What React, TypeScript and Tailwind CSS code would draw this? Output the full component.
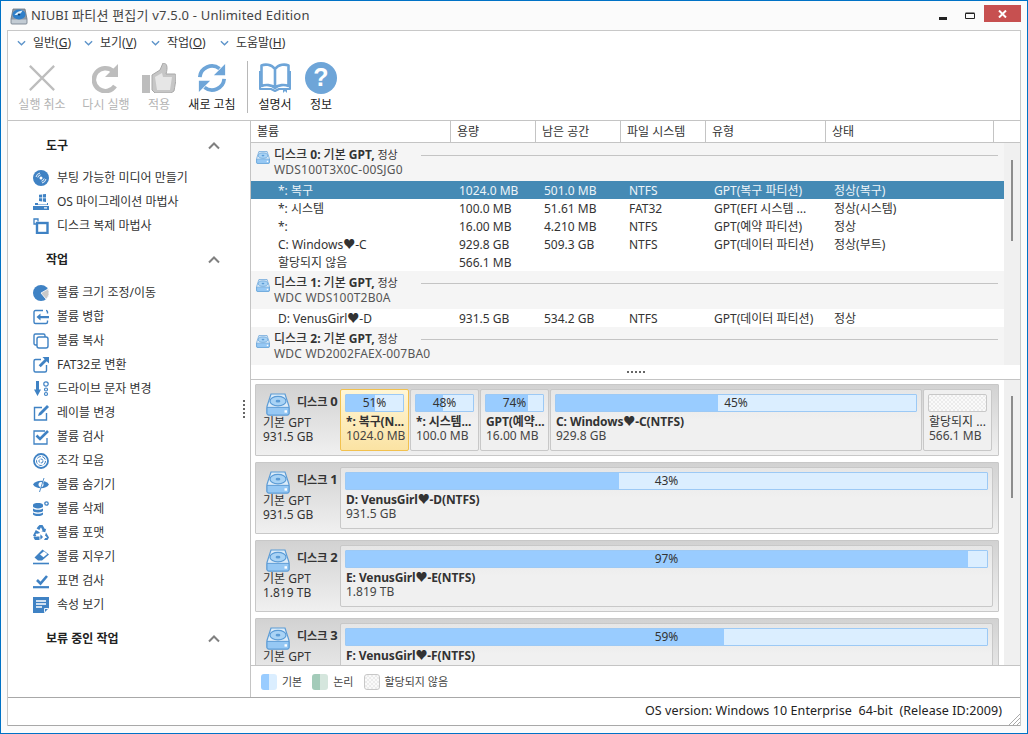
import type { ReactNode } from "react";

const BLUE = "#3f82c4";

function DiskIcon({ className }: { className: string }) {
  return (
    <svg viewBox="0 0 24 24" preserveAspectRatio="none" className={className}>
      <path d="M5 1h14l4 13v7a2 2 0 0 1-2 2H3a2 2 0 0 1-2-2v-7z" fill="#dcecf9" stroke="#5b9bd5" strokeWidth="1.200" />
      <path d="M1 15h22v6a2 2 0 0 1-2 2H3a2 2 0 0 1-2-2z" fill="#96c8f4" stroke="#5b9bd5" strokeWidth="1" />
      <ellipse cx="12" cy="8.500" rx="8" ry="5" fill="#a9d3f5" stroke="#5b9bd5" strokeWidth="1.200" />
      <ellipse cx="12" cy="8.500" rx="2.400" ry="1.500" fill="#5b9bd5" />
      <rect x="18.500" y="18" width="2.500" height="2.500" fill="#fff" />
    </svg>
  );
}

function AppIcon() {
  return (
    <svg viewBox="0 0 18 18" className="h-[18px] w-[18px] shrink-0">
      <path d="M3 2h12l2 10v4a1 1 0 0 1-1 1H2a1 1 0 0 1-1-1v-4z" fill="#8d99a6" stroke="#6a7683" strokeWidth="0.800" />
      <rect x="1.500" y="12.500" width="15" height="4" fill="#c3ccd4" />
      <ellipse cx="9" cy="7.500" rx="6.500" ry="5" fill="#2f7fc9" />
      <path d="M4.500 8c2-3 5-4 8-4.500-1 2.500-4 5-8 4.500z" fill="#dff0fb" />
      <ellipse cx="9" cy="7.500" rx="1.300" ry="1" fill="#123f6b" />
    </svg>
  );
}

function Ico({ children }: { children: ReactNode }) {
  return (
    <svg viewBox="0 0 16 16" className="h-4 w-4 shrink-0" fill="none" stroke={BLUE} strokeWidth="1.400">
      {children}
    </svg>
  );
}

const icons: Record<string, ReactNode> = {
  disc: (
    <>
      <circle cx="8" cy="8" r="8" fill={BLUE} stroke="none" />
      <path d="M3 7a5.200 5.200 0 0 1 4-4M4.800 7.500a3.400 3.400 0 0 1 2.700-2.700" stroke="#fff" strokeWidth="0.900" />
      <path d="M13 9a5.200 5.200 0 0 1-4 4M11.200 8.500a3.400 3.400 0 0 1-2.700 2.700" stroke="#fff" strokeWidth="0.900" />
      <circle cx="8" cy="8" r="1.500" fill="#fff" stroke="none" />
    </>
  ),
  os: (
    <g fill={BLUE} stroke="none">
      <path d="M6 0.800l3-.4v3.100H6zM9.800 0.300l3.200-.3v3.500H9.800zM6 4.300h3v3.100l-3-.4zM9.800 4.300H13V8l-3.200-.4z" />
      <path d="M2 9h3v1.500h9V9h1v2H2zM0 12h16v4H0z" />
      <rect x="11" y="13.300" width="3" height="1.200" fill="#fff" />
    </g>
  ),
  clone: (
    <>
      <path d="M5 3.500V1H1v5h2.500" strokeWidth="1.300" />
      <rect x="4" y="5" width="10.500" height="10" strokeWidth="2.400" />
    </>
  ),
  pie: (
    <>
      <circle cx="8" cy="8" r="8" fill={BLUE} stroke="none" />
      <path d="M8 8l7 -4a8 8 0 0 1-2 10.200z" fill="#c9c9c9" stroke="#fff" strokeWidth="0.800" />
    </>
  ),
  merge: (
    <>
      <path d="M10 1.500H2.500a1.500 1.500 0 0 0-1.500 1.500v10a1.500 1.500 0 0 0 1.500 1.500H13a1.500 1.500 0 0 0 1.500-1.500v-1.500M14.500 4.500V3A1.500 1.500 0 0 0 13 1.500" />
      <path d="M3.500 8l4-3.500V7h8.500v2.200H7.500v2.300z" fill={BLUE} stroke="none" />
    </>
  ),
  copy: (
    <>
      <path d="M4 12H2.500A1.500 1.500 0 0 1 1 10.500v-8A1.500 1.500 0 0 1 2.500 1h8A1.500 1.500 0 0 1 12 2.500V4" />
      <rect x="4" y="4" width="11" height="11" rx="2" />
    </>
  ),
  fat: (
    <>
      <path d="M8 2.500H2.500A1.500 1.500 0 0 0 1 4v9.500A1.500 1.500 0 0 0 2.500 15H12a1.500 1.500 0 0 0 1.500-1.500V8" />
      <path d="M9.500 0H16v6.500l-2.300-2.300-6 6-2-2 6-6z" fill={BLUE} stroke="none" />
    </>
  ),
  letter: (
    <>
      <path d="M1 8.500h2V0h3v8.500h2L4.500 15z" fill={BLUE} stroke="none" />
      <circle cx="13" cy="3" r="2.200" strokeWidth="1.200" />
      <circle cx="13" cy="8.500" r="1.500" strokeWidth="1.200" />
      <circle cx="13" cy="13" r="1.500" strokeWidth="1.200" />
    </>
  ),
  label: (
    <>
      <path d="M9 2.500H1.500v12.500h12V8" />
      <path d="M14 0l2 2-8 8-3 1 1-3z" fill={BLUE} stroke="none" />
    </>
  ),
  check: (
    <>
      <path d="M12 2H1v13h13V9" strokeWidth="1.300" />
      <path d="M3.500 6.500L7 10l8-8" strokeWidth="2.600" />
    </>
  ),
  defrag: (
    <>
      <circle cx="8" cy="8" r="7" strokeWidth="1.800" />
      <circle cx="8" cy="8" r="4.500" strokeWidth="1" strokeDasharray="4 1.500" />
      <circle cx="8" cy="8" r="2" strokeWidth="1" strokeDasharray="3 1" />
    </>
  ),
  hide: (
    <>
      <path d="M0 7.500C3 2.500 13 2.500 16 7.500 13 12.500 3 12.500 0 7.500z" fill={BLUE} stroke="none" />
      <circle cx="8" cy="7.500" r="2.500" fill="#fff" stroke="none" />
      <path d="M11.500 2L6 14" stroke="#fff" strokeWidth="1" />
      <path d="M11 1L6.500 15" strokeWidth="0.900" />
    </>
  ),
  del: (
    <>
      <g fill={BLUE} stroke="none">
        <path d="M0 4c0-2.600 10-2.600 10 0v1.600c0 2.400-10 2.400-10 0zM0 7.500c2 1.800 8 1.800 10 0v2.300c0 2.200-10 2.200-10 0zM0 11.500c2 1.800 8 1.800 10 0v1.700c0 2.400-10 2.400-10 0z" />
      </g>
      <circle cx="13.500" cy="2.500" r="1.700" strokeWidth="1.300" />
    </>
  ),
  format: (
    <g fill={BLUE} stroke="none">
      <path d="M5 1.500L6.500 0h3l2.500 4.200 1.200-.7-1 3.800-3.800-1 1.200-.7L8 2.300 6.300 5 3.600 3.500zM2.800 5l3.400 2 .8 1-3.700 1 .2-1.300-1 1.800 1.500 2.500H1.500L0 10.500zM0.500 12.500L2 15h4.500v-3.500H1.300zM7.500 10.500v-1.300L10 12l-2.500 2.800v-1.300h-.2V10.500zM13 7.500l3 5-1.500 2.500H11l1.200-2h1.800l-1-1.700-1-.6z" />
    </g>
  ),
  erase: (
    <>
      <path d="M9.500 0.500L16 5.500 9 11.500H5L1.500 8.500z" fill={BLUE} stroke="none" />
      <path d="M11 2.200L14.300 5 10.500 8.300 7 5.600z" fill="#fff" stroke="none" />
      <path d="M0 14.500h16" strokeWidth="1.600" />
    </>
  ),
  surface: (
    <>
      <path d="M4 7l3.500 3.500L14 3" strokeWidth="2.600" />
      <path d="M0 14.200h16" strokeWidth="2.200" />
    </>
  ),
  props: (
    <>
      <path d="M0 0h16v11l-5 5H0z" fill={BLUE} stroke="none" />
      <path d="M3 4h10M3 7h10M3 10h6" stroke="#fff" strokeWidth="1.300" />
      <path d="M11.500 15.500v-4h4" stroke="#fff" strokeWidth="0.900" />
    </>
  ),
};

const tools = [
  ["disc", "부팅 가능한 미디어 만들기"],
  ["os", "OS 마이그레이션 마법사"],
  ["clone", "디스크 복제 마법사"],
];

const actions = [
  ["pie", "볼륨 크기 조정/이동"],
  ["merge", "볼륨 병합"],
  ["copy", "볼륨 복사"],
  ["fat", "FAT32로 변환"],
  ["letter", "드라이브 문자 변경"],
  ["label", "레이블 변경"],
  ["check", "볼륨 검사"],
  ["defrag", "조각 모음"],
  ["hide", "볼륨 숨기기"],
  ["del", "볼륨 삭제"],
  ["format", "볼륨 포맷"],
  ["erase", "볼륨 지우기"],
  ["surface", "표면 검사"],
  ["props", "속성 보기"],
];

function Chevron() {
  return (
    <svg viewBox="0 0 12 8" className="h-2 w-3 shrink-0" fill="none" stroke="#808080" strokeWidth="2">
      <path d="M1 6.500l5-5 5 5" />
    </svg>
  );
}

function SideHeader({ title }: { title: string }) {
  return (
    <div className="flex h-[24px] items-center pl-[38px] pr-[30px]">
      <span className="flex-1 font-bold text-[#222]">{title}</span>
      <Chevron />
    </div>
  );
}

function SideList({ items }: { items: string[][] }) {
  return (
    <div className="flex flex-col pl-[25px]">
      {items.map(([icon, label]) => (
        <div key={label} className="flex h-[24px] items-center gap-[8px] text-[#333]">
          <Ico>{icons[icon]}</Ico>
          <span>{label}</span>
        </div>
      ))}
    </div>
  );
}

function Sidebar() {
  return (
    <div className="relative flex w-[243px] shrink-0 flex-col border-r border-[#c4c4c4] bg-white pt-[13px]">
      <SideHeader title="도구" />
      <div className="h-[8px]" />
      <SideList items={tools} />
      <div className="h-[10px]" />
      <SideHeader title="작업" />
      <div className="h-[9px]" />
      <SideList items={actions} />
      <div className="h-[10px]" />
      <SideHeader title="보류 중인 작업" />
      <div className="absolute left-[235px] top-[279px] flex flex-col gap-[2px]">
        {[0, 1, 2, 3, 4].map((i) => (
          <div key={i} className="h-[2px] w-[2px] bg-[#666]" />
        ))}
      </div>
    </div>
  );
}

function ToolButton({ width, label, dim, children }: { width: string; label: string; dim?: boolean; children: ReactNode }) {
  return (
    <div className={`flex flex-col items-center ${width}`}>
      <div className="flex h-[36px] items-center justify-center">{children}</div>
      <span className={`mt-[1px] whitespace-nowrap leading-[16px] ${dim ? "text-[#b4b4b4]" : "text-[#222]"}`}>{label}</span>
    </div>
  );
}

function Toolbar() {
  const menus = [
    ["일반(", "G", ")"],
    ["보기(", "V", ")"],
    ["작업(", "O", ")"],
    ["도움말(", "H", ")"],
  ];
  return (
    <div className="h-[90px] shrink-0 border-b border-[#c4c4c4] bg-white">
      <div className="flex h-[24px] items-center pl-[9px]">
        {menus.map((m, i) => (
          <div key={m[1]} className={`flex items-center gap-[7px] text-[#333] ${i === 2 ? "w-[69px]" : "w-[67px]"}`}>
            <svg viewBox="0 0 10 7" className="h-[7px] w-[9px]" fill="none" stroke="#5c93c9" strokeWidth="1.500">
              <path d="M1 1l4 4 4-4" />
            </svg>
            <span>
              {m[0]}
              <u>{m[1]}</u>
              {m[2]}
            </span>
          </div>
        ))}
      </div>
      <div className="flex items-start pl-[2px] pt-[5px]">
        <ToolButton width="w-[64px]" label="실행 취소" dim>
          <svg viewBox="0 0 30 30" className="h-[28px] w-[28px]" stroke="#bdbdbd" strokeWidth="2.400">
            <path d="M2 2l26 26M28 2L2 28" />
          </svg>
        </ToolButton>
        <ToolButton width="w-[64px]" label="다시 실행" dim>
          <svg viewBox="0 0 28 30" className="h-[30px] w-[28px]" fill="none" stroke="#bdbdbd" strokeWidth="4.500">
            <path d="M23 23a11.500 11.500 0 1 1 -2 -15" />
            <path d="M26 1v13H13z" fill="#bdbdbd" stroke="none" />
          </svg>
        </ToolButton>
        <ToolButton width="w-[42px]" label="적용" dim>
          <svg viewBox="0 0 34 30" className="h-[30px] w-[34px]">
            <rect x="0" y="12" width="8" height="18" fill="#bdbdbd" />
            <path d="M10 12l8-5 3-7c4 0 5 4 3 11h9c2 0 1 6-1 17l-3 2H13l-3-3z" fill="#c6c6c6" stroke="#a8a8a8" strokeWidth="1" />
            <path d="M13 14l7-4 1 4h9l-2 13H15z" fill="#e6e6e6" />
          </svg>
        </ToolButton>
        <ToolButton width="w-[64px]" label="새로 고침">
          <svg viewBox="0 0 32 32" className="h-[30px] w-[30px]" fill="none" stroke="#6ea5d8" strokeWidth="4">
            <path d="M3 15A13 13 0 0 1 24 6" />
            <path d="M30 1v12H18z" fill="#6ea5d8" stroke="none" />
            <path d="M29 17A13 13 0 0 1 8 26" />
            <path d="M2 31V19h12z" fill="#6ea5d8" stroke="none" />
          </svg>
        </ToolButton>
        <div className="ml-[3px] mr-[2px] mt-[1px] h-[52px] w-px bg-[#b8b8b8]" />
        <ToolButton width="w-[50px]" label="설명서">
          <svg viewBox="0 0 32 32" className="h-[32px] w-[32px]" fill="none" stroke="#6ea5d8" strokeWidth="2.600" strokeLinejoin="round">
            <path d="M16 7C12 2 6 2 2.500 3.500V24c4-1.500 10-1.500 13.500 2 3.500-3.500 9.500-3.500 13.500-2V3.500C26 2 20 2 16 7zM16 7v19" />
            <path d="M1 9v18h11l4 2 4-2h11V9" strokeWidth="2" />
            <path d="M24 26v5l2-2 2 2v-5z" fill="#6ea5d8" stroke="none" />
          </svg>
        </ToolButton>
        <ToolButton width="w-[42px]" label="정보">
          <div className="flex h-[32px] w-[32px] items-center justify-center rounded-full bg-[#6ea5d8] font-['Liberation_Sans',sans-serif] text-[25px] font-bold text-white">?</div>
        </ToolButton>
      </div>
    </div>
  );
}

const columns = [
  ["볼륨", "w-[200px]"],
  ["용량", "w-[85px]"],
  ["남은 공간", "w-[85px]"],
  ["파일 시스템", "w-[85px]"],
  ["유형", "w-[120px]"],
  ["상태", "w-[168px]"],
];

function HeaderRow() {
  return (
    <div className="flex h-[22px] shrink-0 border-b border-[#c4c4c4] bg-white text-[#333]">
      {columns.map(([label, w]) => (
        <div key={label} className={`flex items-center border-r border-[#c4c4c4] pl-[6px] ${w}`}>
          {label}
        </div>
      ))}
    </div>
  );
}

function Group({ num, model }: { num: string; model: string }) {
  return (
    <div className="flex h-[38px] bg-[#f5f5f5] pl-[5px] pr-[6px] pt-[4px]">
      <DiskIcon className="mt-[4px] h-[13px] w-[14px] shrink-0" />
      <div className="ml-[4px] w-[147px] shrink-0 leading-[15px]">
        <div className="whitespace-nowrap text-[#333]">
          <span className="font-medium">디스크 </span>
          <span className="font-bold">{num}:</span>
          <span className="font-medium"> 기본 </span>
          <span className="font-bold">GPT,</span>
          <span className="text-[11px]"> 정상</span>
        </div>
        <div className="whitespace-nowrap tracking-[0.2px] text-[#555]">{model}</div>
      </div>
      <div className="mt-[8px] h-px flex-1 bg-[#c4c4c4]" />
    </div>
  );
}

function Row({ cells, selected }: { cells: string[]; selected?: boolean }) {
  return (
    <div className={`flex h-[18px] items-center whitespace-nowrap pt-px ${selected ? "bg-[#458ab5] text-[#eef4f8]" : "bg-white text-[#333]"}`}>
      <div className="w-[200px] pl-[27px]">{cells[0]}</div>
      <div className="w-[85px] pl-[8px]">{cells[1]}</div>
      <div className="w-[85px] pl-[8px]">{cells[2]}</div>
      <div className="w-[85px] pl-[8px]">{cells[3]}</div>
      <div className="w-[120px] pl-[8px]">{cells[4]}</div>
      <div className="pl-[8px]">{cells[5]}</div>
    </div>
  );
}

function Scroll({ thumb }: { thumb: string }) {
  return (
    <div className="w-[16px] shrink-0 bg-[#f0f0f0] pl-[7px]">
      <div className={`w-[2px] bg-[#8c8c8c] ${thumb}`} />
    </div>
  );
}

function Bar({ pct, fill }: { pct: string; fill: string }) {
  return (
    <div className="relative h-[18px] overflow-hidden rounded-[1px] border border-[#9cc9f5] bg-[#dbeeff] text-center leading-[16px] text-[#333]">
      <div className={`absolute inset-y-0 left-0 bg-[#99ccff] ${fill}`} />
      <span className="relative">{pct}</span>
    </div>
  );
}

function Part({ width, name, size, pct, fill, selected }: { width: string; name: string; size: string; pct: string; fill: string; selected?: boolean }) {
  return (
    <div
      className={`flex flex-col rounded-[2px] border px-[4px] pt-[4px] ${width} ${
        selected ? "border-[#f2c14e] bg-gradient-to-b from-[#fff6d6] to-[#fbe3a3]" : "border-[#c8c8c8] bg-gradient-to-b from-[#e6e6e6] via-[#f0f0f0] to-[#f0f0f0]"
      }`}
    >
      <Bar pct={pct} fill={fill} />
      <div className="mt-[3px] whitespace-nowrap pl-px font-bold leading-[14px] tracking-[-0.1px] text-[#333]">{name}</div>
      <div className="whitespace-nowrap pl-px leading-[14px] text-[#444]">{size}</div>
    </div>
  );
}

function DiskCard({ num, kind, size, children }: { num: string; kind: string; size: string; children: ReactNode }) {
  return (
    <div className="flex h-[72px] shrink-0 rounded-[1px] border border-[#c8c8c8] bg-gradient-to-b from-[#d2d2d2] to-[#f0f0f0] py-[4px] pr-[5px]">
      <div className="w-[84px] shrink-0 pl-[7px] text-[#333]">
        <div className="flex h-[27px] items-start">
          <DiskIcon className="ml-[3px] mt-[4px] h-[23px] w-[24px] shrink-0" />
          <span className="ml-[7px] mt-[4px] whitespace-nowrap text-[11px] font-bold leading-[16px]">
            디스크 <span className="text-[13px]">{num}</span>
          </span>
        </div>
        <div className="leading-[14px]">{kind}</div>
        <div className="leading-[14px]">{size}</div>
      </div>
      <div className="flex flex-1 gap-px">{children}</div>
    </div>
  );
}

function Legend({ left, right, label }: { left: string; right: string; label: string }) {
  return (
    <div className="flex items-center gap-[5px]">
      <div className="flex h-[16px] w-[16px] overflow-hidden rounded-[3px]">
        <div className={`w-1/2 ${left}`} />
        <div className={`w-1/2 ${right}`} />
      </div>
      <span className="text-[11px] text-[#444]">{label}</span>
    </div>
  );
}

export default function App() {
  return (
    <div className="flex h-[734px] w-[1028px] flex-col overflow-hidden border border-[#0072c6] bg-[#fbfbfb] font-['Noto_Sans','Noto_Sans_CJK_KR',sans-serif] text-[12px]">
      {/* Title bar */}
      <div className="flex h-[29px] shrink-0 items-center pl-[9px]">
        <AppIcon />
        <span className="ml-[3px] flex-1 text-[13px] tracking-[0.19px] text-[#444]">NIUBI 파티션 편집기 v7.5.0 - Unlimited Edition</span>
        <svg viewBox="0 0 8 3" className="mt-[6px] h-[3px] w-[8px]">
          <rect width="8" height="3" fill="#222" />
        </svg>
        <svg viewBox="0 0 10 7" className="mb-[1px] ml-[18px] h-[7px] w-[10px]" fill="none" stroke="#222">
          <path d="M.5 1.500h9v5h-9zM.5 1h9" />
        </svg>
        <div className="mb-[4px] ml-[9px] mr-[6px] flex h-[17px] w-[37px] items-center justify-center bg-[#c75050]">
          <svg viewBox="0 0 9 8" className="h-[8px] w-[9px]" stroke="#fff" strokeWidth="2">
            <path d="M1 .5l7 7M8 .5l-7 7" />
          </svg>
        </div>
      </div>
      {/* Client frame */}
      <div className="mx-[6px] flex h-[696px] shrink-0 flex-col border border-b-0 border-[#c8c8c8] bg-white">
        <Toolbar />
        <div className="flex min-h-0 flex-1">
          <Sidebar />
          <div className="flex min-w-0 flex-1 flex-col">
            <HeaderRow />
            <div className="flex h-[237px] shrink-0 flex-col border-b border-[#c4c4c4]">
              <div className="flex h-[222px] shrink-0">
                <div className="min-w-0 flex-1">
                  <Group num="0" model="WDS100T3X0C-00SJG0" />
                  <Row selected cells={["*: 복구", "1024.0 MB", "501.0 MB", "NTFS", "GPT(복구 파티션)", "정상(복구)"]} />
                  <Row cells={["*: 시스템", "100.0 MB", "51.61 MB", "FAT32", "GPT(EFI 시스템 ...", "정상(시스템)"]} />
                  <Row cells={["*:", "16.00 MB", "4.210 MB", "NTFS", "GPT(예약 파티션)", "정상"]} />
                  <Row cells={["C: Windows♥-C", "929.8 GB", "509.3 GB", "NTFS", "GPT(데이터 파티션)", "정상(부트)"]} />
                  <Row cells={["할당되지 않음", "566.1 MB", "", "", "", ""]} />
                  <Group num="1" model="WDC WDS100T2B0A" />
                  <Row cells={["D: VenusGirl♥-D", "931.5 GB", "534.2 GB", "NTFS", "GPT(데이터 파티션)", "정상"]} />
                  <Group num="2" model="WDC WD2002FAEX-007BA0" />
                </div>
                <Scroll thumb="mt-[17px] h-[81px]" />
              </div>
              {/* Splitter grip */}
              <div className="flex flex-1 items-center justify-center gap-[2px]">
                {[0, 1, 2, 3, 4].map((i) => (
                  <div key={i} className="h-[2px] w-[2px] bg-[#666]" />
                ))}
              </div>
            </div>
            {/* Disk map */}
            <div className="flex h-[286px] shrink-0 border-b border-[#c4c4c4]">
              <div className="flex min-w-0 flex-1 flex-col gap-[6px] overflow-hidden pl-[4px] pr-[5px] pt-[4px]">
                <DiskCard num="0" kind="기본 GPT" size="931.5 GB">
                  <Part selected width="w-[69px]" name="*: 복구(N..." size="1024.0 MB" pct="51%" fill="w-[51%]" />
                  <Part width="w-[69px]" name="*: 시스템..." size="100.0 MB" pct="48%" fill="w-[48%]" />
                  <Part width="w-[69px]" name="GPT(예약..." size="16.00 MB" pct="74%" fill="w-[74%]" />
                  <Part width="w-[372px]" name="C: Windows♥-C(NTFS)" size="929.8 GB" pct="45%" fill="w-[45%]" />
                  <div className="flex w-[69px] flex-col rounded-[2px] border border-[#c8c8c8] bg-[#f0f0f0] px-[4px] pt-[4px]">
                    <div className="h-[18px] rounded-[2px] border border-[#c8c8c8] bg-[repeating-conic-gradient(#ececec_0_25%,#fafafa_0_50%)] bg-[length:4px_4px]" />
                    <div className="mt-[3px] whitespace-nowrap pl-px leading-[14px] text-[#333]">할당되지 ...</div>
                    <div className="whitespace-nowrap pl-px leading-[14px] text-[#444]">566.1 MB</div>
                  </div>
                </DiskCard>
                <DiskCard num="1" kind="기본 GPT" size="931.5 GB">
                  <Part width="flex-1" name="D: VenusGirl♥-D(NTFS)" size="931.5 GB" pct="43%" fill="w-[42.6%]" />
                </DiskCard>
                <DiskCard num="2" kind="기본 GPT" size="1.819 TB">
                  <Part width="flex-1" name="E: VenusGirl♥-E(NTFS)" size="1.819 TB" pct="97%" fill="w-[97%]" />
                </DiskCard>
                <DiskCard num="3" kind="기본 GPT" size="1.819 TB">
                  <Part width="flex-1" name="F: VenusGirl♥-F(NTFS)" size="1.819 TB" pct="59%" fill="w-[59%]" />
                </DiskCard>
              </div>
              <Scroll thumb="mt-[16px] h-[102px]" />
            </div>
            {/* Legend */}
            <div className="flex flex-1 items-center gap-[10px] bg-white pl-[10px] pt-px">
              <Legend left="bg-[#99ccff]" right="bg-[#dbeeff]" label="기본" />
              <Legend left="bg-[#a3cbb9]" right="bg-[#d5e6dd]" label="논리" />
              <div className="flex items-center gap-[5px]">
                <div className="h-[16px] w-[16px] rounded-[3px] border border-[#c8c8c8] bg-[repeating-conic-gradient(#ececec_0_25%,#fafafa_0_50%)] bg-[length:4px_4px]" />
                <span className="text-[11px] text-[#444]">할당되지 않음</span>
              </div>
            </div>
          </div>
        </div>
        {/* Status bar */}
        <div className="relative flex h-[29px] shrink-0 items-center justify-end border-y border-y-[#a8a8a8] bg-white pr-[18px] text-[12.5px] tracking-[0.08px] text-[#222]">
          <span className="whitespace-pre">OS version: Windows 10 Enterprise  64-bit  (Release ID:2009)</span>
          <svg viewBox="0 0 11 11" className="absolute bottom-0 right-0 h-[11px] w-[11px]" stroke="#aaa" strokeWidth="1">
            <path d="M11 0L0 11M11 4l-7 7M11 8l-3 3" />
          </svg>
        </div>
      </div>
    </div>
  );
}
